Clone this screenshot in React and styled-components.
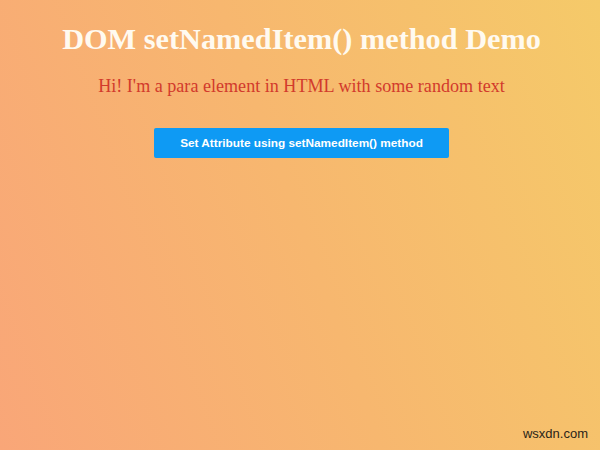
import styled, { createGlobalStyle } from "styled-components";

const GlobalStyle = createGlobalStyle`
  html, body {
    margin: 0;
    padding: 0;
  }
  body {
    min-height: 100vh;
    background: linear-gradient(70deg, #f9a678 0%, #f7b76f 50%, #f5ca69 100%);
    font-family: "Liberation Serif", "Times New Roman", serif;
  }
`;

const Page = styled.div`
  position: relative;
  width: 600px;
  height: 450px;
  display: flex;
  flex-direction: column;
  align-items: center;
  padding: 21px 0 0 3px;
  box-sizing: border-box;
`;

const Title = styled.h1`
  margin: 0;
  color: #fffaf0;
  font-size: 30.3px;
  font-weight: bold;
  line-height: 36px;
`;

const Para = styled.p`
  margin: 18px 0 0;
  color: #d23a2c;
  font-size: 18.1px;
  line-height: 22px;
`;

const Button = styled.button`
  margin-top: 31px;
  width: 295px;
  height: 30px;
  border: none;
  border-radius: 2px;
  background: #0e9af4;
  color: #ffffff;
  font-family: "Liberation Sans", Arial, sans-serif;
  font-size: 11.8px;
  font-weight: bold;
  cursor: pointer;
`;

const Watermark = styled.span`
  position: absolute;
  right: 12px;
  bottom: 9px;
  font-family: "Liberation Sans", Arial, sans-serif;
  font-size: 13px;
  color: #2a2418;
`;

export default function App() {
  return (
    <>
      <GlobalStyle />
      <Page>
        <Title>DOM setNamedItem() method Demo</Title>
        <Para>Hi! I'm a para element in HTML with some random text</Para>
        <Button>Set Attribute using setNamedItem() method</Button>
        <Watermark>wsxdn.com</Watermark>
      </Page>
    </>
  );
}
